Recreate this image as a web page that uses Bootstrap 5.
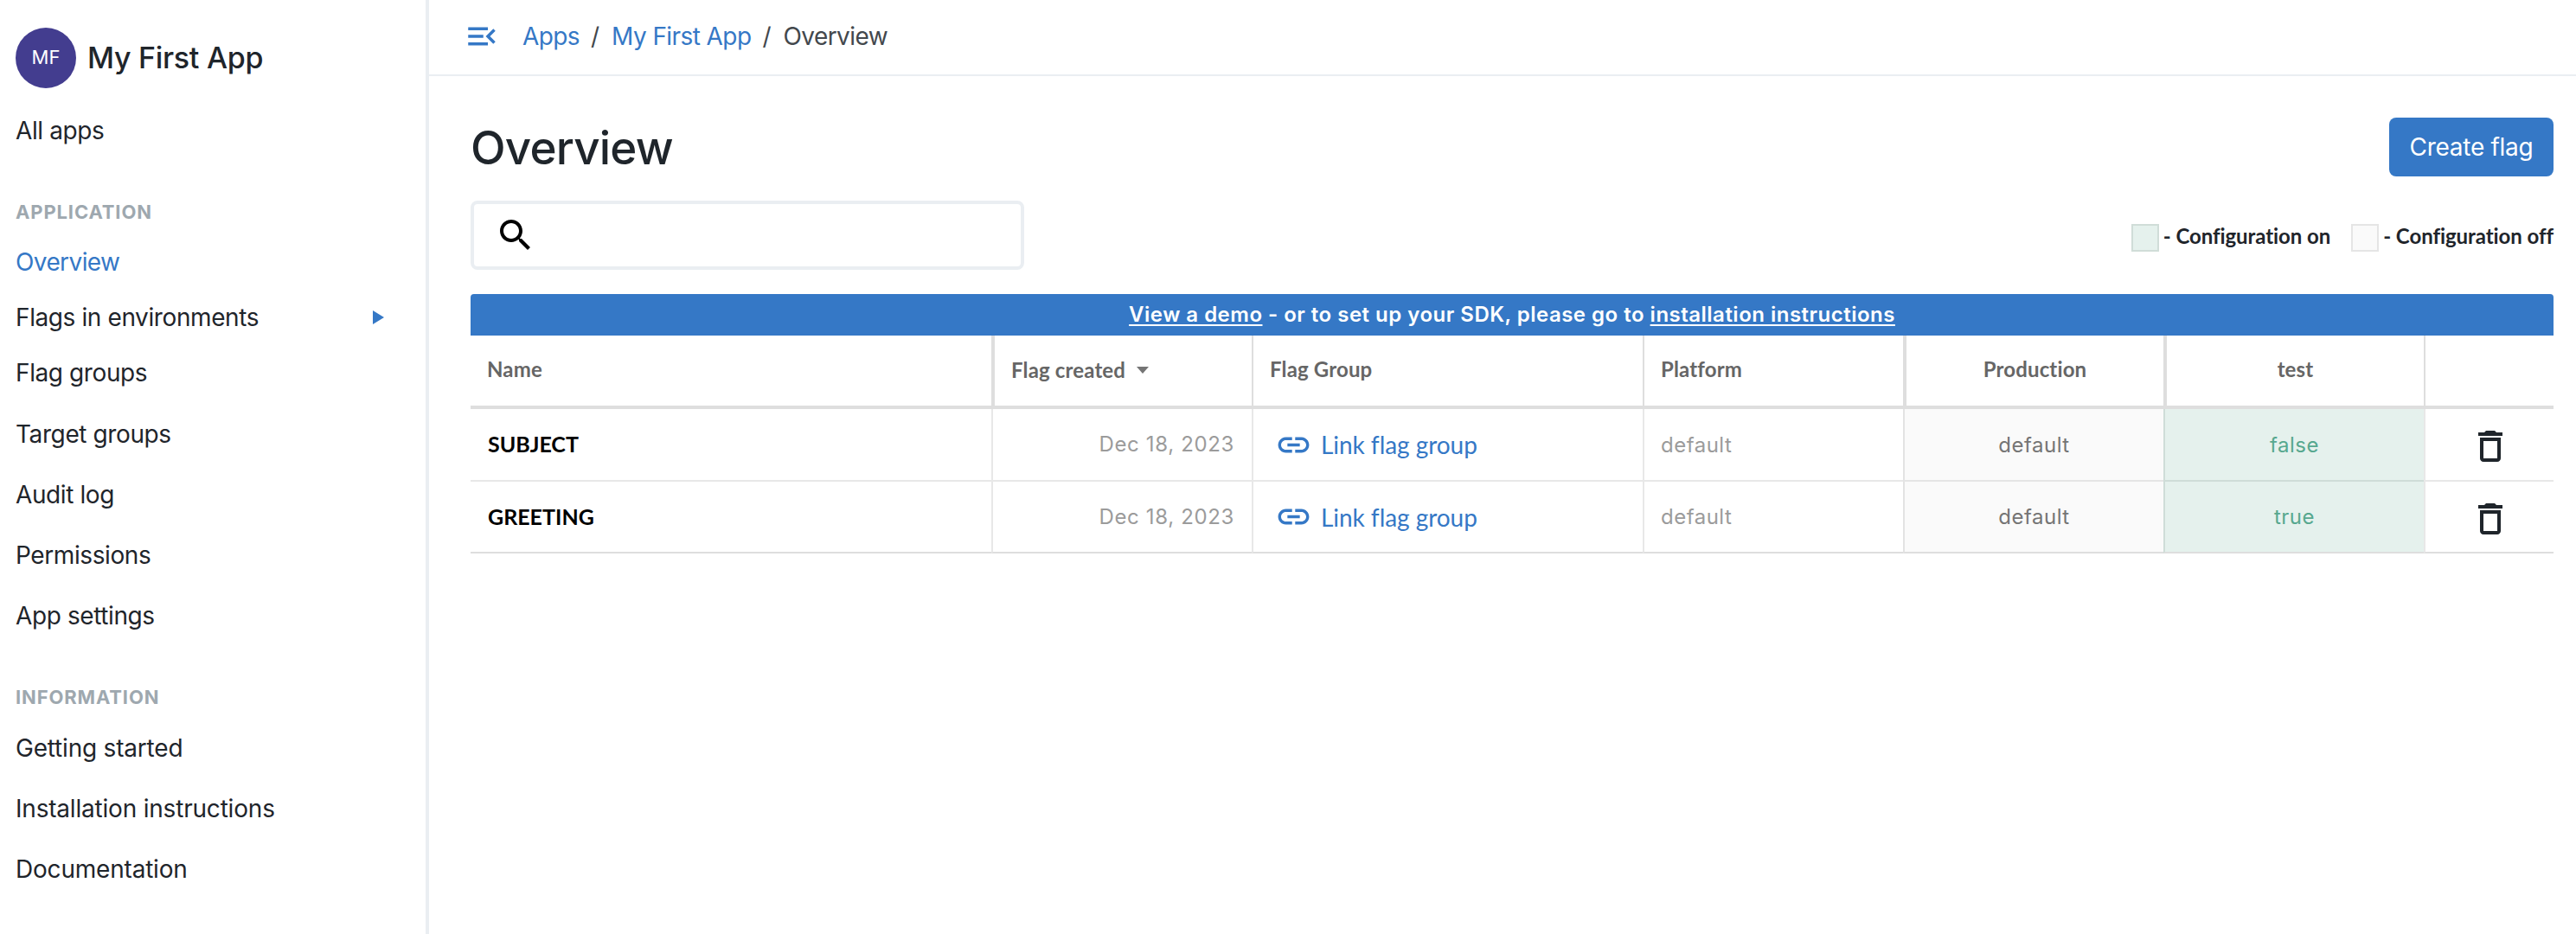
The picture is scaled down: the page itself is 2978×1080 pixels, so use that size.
<!DOCTYPE html>
<html lang="en">
<head>
<meta charset="utf-8">
<meta name="viewport" content="width=device-width, initial-scale=1">
<title>My First App - Overview</title>
<link href="https://cdn.jsdelivr.net/npm/bootstrap@5.3.0/dist/css/bootstrap.min.css" rel="stylesheet">
<style>
  :root { --brand: #3578c6; --ink: #1f252b; --soft: #eaeef2; --rule: #dedede; --rule-light: #e8e8e8; }
  body { font-family: Inter, "Liberation Sans", sans-serif; font-size: 28px; color: var(--ink); letter-spacing: -.4px; background: #fff; }
  a { color: var(--brand); text-decoration: none; }
  svg { display: block; flex: none; }

  .sidebar { width: 496px; border-right: 4px solid var(--soft); padding: 31px 48px 0 18px; }
  .avatar { width: 70px; height: 70px; background: #433d8f; color: #fff; font-size: 22px; letter-spacing: 0; padding-bottom: 1px; }
  .app-name { font-size: 34px; font-weight: 500; letter-spacing: -.3px; margin-left: 13px; line-height: 70px; padding-top: 1px; }
  .sidebar .nav { margin-top: 14px; }
  .sidebar .nav-link { color: var(--ink); padding: 0; height: 70px; line-height: 70px; }
  .sidebar .tight { height: 64px; line-height: 65px; }
  .sidebar .nav-link.active { color: var(--brand); letter-spacing: -.6px; }
  .sidebar .info-link { letter-spacing: -.2px; }
  .nav-heading { font-size: 22px; font-weight: 700; letter-spacing: .87px; color: #9ea8af; line-height: 32px; margin: 43px 0 10px; }
  .nav-heading.second { margin-bottom: 8px; }

  .topbar { height: 88px; border-bottom: 2px solid var(--soft); padding: 0 0 3px 40px; }
  .crumbs { --bs-breadcrumb-divider-color: #43484d; --bs-breadcrumb-item-active-color: #43484d; --bs-breadcrumb-item-padding-x: 13px; line-height: 42px; margin-left: 26px; letter-spacing: -.58px; }
  .crumbs .breadcrumb-item + .breadcrumb-item::before { padding-right: 14.500px; }

  .page { padding: 48px 26px 0 48px; }
  .page-title { font-size: 53px; font-weight: 500; letter-spacing: -.85px; line-height: 68px; padding-top: 1px; margin-bottom: -1px; }
  .btn-create { --bs-btn-color: #fff; --bs-btn-bg: var(--brand); --bs-btn-hover-color: #fff; --bs-btn-hover-bg: #2c69b1; font-size: 28px; letter-spacing: -.28px; width: 190px; height: 68px; border: 0; border-radius: 8px; padding: 0; }
  .toolbar { margin: 28px 0; }
  .search-box { width: 640px; height: 80px; border: 4px solid var(--soft); border-radius: 8px; padding-left: 24px; }
  .search-box input { font-size: 28px; box-shadow: none !important; }
  .legend { font-family: Lato, sans-serif; font-size: 24px; font-weight: 700; letter-spacing: -.07px; line-height: 28px; padding-top: 6px; }
  .legend-text { padding-bottom: 4px; }
  .swatch { width: 32px; height: 32px; border: 2px solid; margin-right: 5px; }
  .swatch-on { background: #e5f1ed; border-color: #d0ddd8; }
  .swatch-off { background: #fafafa; border-color: #e5e5e5; }

  .demo-bar { height: 48px; line-height: 48px; background: var(--brand); color: #fff; font-size: 24px; font-weight: 600; letter-spacing: .49px; border-radius: 4px 4px 0 0; }
  .demo-bar a { color: #fff; text-decoration: underline; text-decoration-thickness: 2px; text-underline-offset: 3px; }

  .flags { table-layout: fixed; border-collapse: separate; border-spacing: 0; width: 2408px; font-size: 24px; }
  .flags th, .flags td { padding: 0 0 0 19px; border: 0 solid var(--rule-light); vertical-align: middle; }
  .flags th + th, .flags td + td { border-left-width: 2px; }
  .flags th { font-family: Lato, sans-serif; font-weight: 700; color: #666; letter-spacing: .15px; height: 85px; line-height: 40px; padding-bottom: 3px; border-color: var(--rule); border-bottom-width: 4px; }
  .flags th.thick { border-left-width: 4px; }
  .flags td { height: 84px; line-height: 40px; border-bottom-width: 2px; }
  .flags tr:last-child td { height: 83px; border-bottom-color: var(--rule); }
  .flags .centered { text-align: center; padding-left: 0; }
  .sort-label { padding-top: 2px; gap: 13px; }
  .flags .flag-name { font-family: Lato, sans-serif; font-size: 25px; font-weight: 700; color: #000; letter-spacing: 0; padding: 0 0 2px 20px; }
  .flags .flag-date { color: #9b9b9b; text-align: right; padding: 0 20px 0 0; letter-spacing: .65px; }
  .flags .flag-value { letter-spacing: .5px; color: #9b9b9b; padding-top: 1px; }
  .flags .env-off { background: #fafafa; color: #757575; border-left-color: #e3e3e3; border-bottom-color: #e5e5e5; }
  .flags .env-on { background: #e5f1ed; color: #57a88f; border-left-color: #cfddd8; border-bottom-color: #cfddd8; }
  .flags tr:last-child .env-off, .flags tr:last-child .env-on { border-bottom-color: var(--rule); }
  .flags .row-action { padding: 4px 0 0 1px; }
  .group-link { font-family: Lato, sans-serif; font-size: 28px; letter-spacing: -.05px; padding-left: 6px; gap: 10px; }
</style>
</head>
<body>
<div class="d-flex min-vh-100">
  <aside class="sidebar flex-shrink-0">
    <div class="d-flex align-items-center">
      <span class="avatar rounded-circle d-flex align-items-center justify-content-center">MF</span>
      <span class="app-name">My First App</span>
    </div>
    <nav class="nav flex-column flex-nowrap">
      <a class="nav-link" href="#">All apps</a>
      <h6 class="nav-heading">APPLICATION</h6>
      <a class="nav-link tight active" href="#">Overview</a>
      <a class="nav-link tight d-flex align-items-center justify-content-between" href="#">Flags in environments
        <svg width="13" height="16" viewBox="0 0 13 16"><path fill="#3578c6" d="M0 0l13 8-13 8z"/></svg>
      </a>
      <a class="nav-link tight mb-1" href="#">Flag groups</a>
      <a class="nav-link" href="#">Target groups</a>
      <a class="nav-link" href="#">Audit log</a>
      <a class="nav-link" href="#">Permissions</a>
      <a class="nav-link" href="#">App settings</a>
      <h6 class="nav-heading second">INFORMATION</h6>
      <a class="nav-link info-link" href="#">Getting started</a>
      <a class="nav-link info-link" href="#">Installation instructions</a>
      <a class="nav-link info-link" href="#">Documentation</a>
    </nav>
  </aside>

  <div class="flex-grow-1">
    <header class="topbar d-flex align-items-center">
      <svg width="42" height="42" viewBox="0 0 24 24" fill="#3578c6"><path d="M3 18h13v-2H3v2zM3 6v2h13V6H3zm0 7h10v-2H3v2zm18 2.590L17.420 12 21 8.410 19.590 7l-5 5 5 5L21 15.590z"/></svg>
      <ol class="breadcrumb crumbs mb-0">
        <li class="breadcrumb-item"><a href="#">Apps</a></li>
        <li class="breadcrumb-item"><a href="#">My First App</a></li>
        <li class="breadcrumb-item active">Overview</li>
      </ol>
    </header>

    <main class="page">
      <div class="d-flex justify-content-between align-items-start">
        <h1 class="page-title">Overview</h1>
        <button class="btn btn-create" type="button">Create flag</button>
      </div>

      <div class="toolbar d-flex justify-content-between align-items-center">
        <div class="search-box d-flex align-items-center">
          <svg width="48" height="48" viewBox="0 0 24 24"><path d="M15.5 14h-.79l-.28-.27C15.41 12.59 16 11.11 16 9.5 16 5.91 13.09 3 9.5 3S3 5.91 3 9.5 5.91 16 9.5 16c1.61 0 3.09-.59 4.23-1.57l.27.28v.79l5 4.99L20.49 19l-4.99-5zm-6 0C7.01 14 5 11.99 5 9.5S7.01 5 9.5 5 14 7.01 14 9.5 11.99 14 9.5 14z"/></svg>
          <input class="form-control border-0" type="text" aria-label="Search">
        </div>
        <div class="legend d-flex align-items-center">
          <span class="swatch swatch-on"></span><span class="legend-text">- Configuration on</span>
          <span class="swatch swatch-off ms-4"></span><span class="legend-text">- Configuration off</span>
        </div>
      </div>

      <div class="demo-bar text-center"><a href="#">View a demo</a> - or to set up your SDK, please go to <a href="#">installation instructions</a></div>
      <table class="flags">
        <colgroup><col style="width:602px"><col style="width:301px"><col style="width:452px"><col style="width:301px"><col style="width:301px"><col style="width:301px"><col style="width:150px"></colgroup>
        <thead>
          <tr>
            <th>Name</th>
            <th class="thick"><span class="sort-label d-flex align-items-center">Flag created<svg width="14" height="8" viewBox="0 0 14 8"><path fill="#757575" d="M0 0h14L7 8z"/></svg></span></th>
            <th>Flag Group</th>
            <th>Platform</th>
            <th class="thick centered">Production</th>
            <th class="thick centered">test</th>
            <th></th>
          </tr>
        </thead>
        <tbody>
          <tr>
            <td class="flag-name">SUBJECT</td>
            <td class="flag-date">Dec 18, 2023</td>
            <td><a class="group-link d-flex align-items-center" href="#"><svg width="43" height="43" viewBox="0 0 24 24" fill="#3578c6"><path d="M3.9 12c0-1.71 1.39-3.1 3.1-3.1h4V7H7c-2.76 0-5 2.24-5 5s2.24 5 5 5h4v-1.9H7c-1.71 0-3.1-1.39-3.1-3.1zM8 13h8v-2H8v2zm9-6h-4v1.9h4c1.71 0 3.1 1.39 3.1 3.1s-1.39 3.1-3.1 3.1h-4V17h4c2.76 0 5-2.24 5-5s-2.24-5-5-5z"/></svg>Link flag group</a></td>
            <td class="flag-value">default</td>
            <td class="flag-value centered env-off">default</td>
            <td class="flag-value centered env-on">false</td>
            <td class="row-action"><svg class="mx-auto" width="48" height="48" viewBox="0 0 24 24" fill="#1f252b"><path d="M6 19c0 1.1.9 2 2 2h8c1.1 0 2-.9 2-2V7H6v12zM8 9h8v10H8V9zm7.5-5l-1-1h-5l-1 1H5v2h14V4h-3.5z"/></svg></td>
          </tr>
          <tr>
            <td class="flag-name">GREETING</td>
            <td class="flag-date">Dec 18, 2023</td>
            <td><a class="group-link d-flex align-items-center" href="#"><svg width="43" height="43" viewBox="0 0 24 24" fill="#3578c6"><path d="M3.9 12c0-1.71 1.39-3.1 3.1-3.1h4V7H7c-2.76 0-5 2.24-5 5s2.24 5 5 5h4v-1.9H7c-1.71 0-3.1-1.39-3.1-3.1zM8 13h8v-2H8v2zm9-6h-4v1.9h4c1.71 0 3.1 1.39 3.1 3.1s-1.39 3.1-3.1 3.1h-4V17h4c2.76 0 5-2.24 5-5s-2.24-5-5-5z"/></svg>Link flag group</a></td>
            <td class="flag-value">default</td>
            <td class="flag-value centered env-off">default</td>
            <td class="flag-value centered env-on">true</td>
            <td class="row-action"><svg class="mx-auto" width="48" height="48" viewBox="0 0 24 24" fill="#1f252b"><path d="M6 19c0 1.1.9 2 2 2h8c1.1 0 2-.9 2-2V7H6v12zM8 9h8v10H8V9zm7.5-5l-1-1h-5l-1 1H5v2h14V4h-3.5z"/></svg></td>
          </tr>
        </tbody>
      </table>
    </main>
  </div>
</div>
<script src="https://cdn.jsdelivr.net/npm/bootstrap@5.3.0/dist/js/bootstrap.bundle.min.js"></script>
</body>
</html>
